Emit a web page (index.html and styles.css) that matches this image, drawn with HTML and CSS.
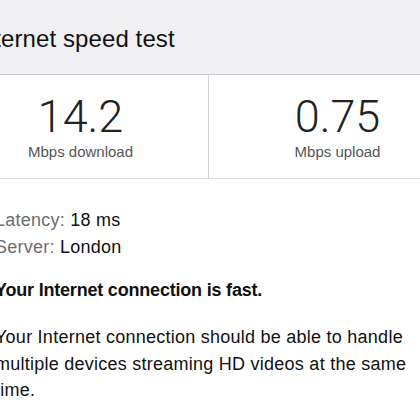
FILE: index.html
```html
<!DOCTYPE html>
<html>
<head>
<meta charset="utf-8">
<link rel="stylesheet" href="styles.css">
</head>
<body>
<div class="page">
  <header class="header">
    <h1 class="title">Internet speed test</h1>
  </header>
  <section class="stats">
    <div class="stat">
      <div class="stat-value">14.2</div>
      <div class="stat-label">Mbps download</div>
    </div>
    <div class="stat">
      <div class="stat-value">0.75</div>
      <div class="stat-label">Mbps upload</div>
    </div>
  </section>
  <section class="details">
    <div class="meta">
      <div class="meta-row"><span class="meta-key">Latency:</span> 18 ms</div>
      <div class="meta-row"><span class="meta-key">Server:</span> London</div>
    </div>
    <p class="verdict">Your Internet connection is fast.</p>
    <p class="explain">Your Internet connection should be able to handle multiple devices streaming HD videos at the same time.</p>
  </section>
</div>
</body>
</html>
```
FILE: styles.css
```css
html, body {
  margin: 0;
  padding: 0;
  background: #ffffff;
  overflow: hidden;
}
body {
  font-family: "Liberation Sans", Arial, sans-serif;
  color: #111111;
}
.page {
  width: 513px;
  margin-left: -47px;
}
.header {
  box-sizing: border-box;
  height: 75px;
  background: #f0f0f3;
  border-bottom: 1px solid #c9c9cd;
  padding: 24px 0 0 21px;
}
.title {
  margin: 0;
  font-size: 24px;
  line-height: 30px;
  font-weight: normal;
  color: #111;
  letter-spacing: 0.1px;
}
.stats {
  display: grid;
  grid-template-columns: 256px 257px;
  border-bottom: 1px solid #dcdcdc;
}
.stat {
  text-align: center;
  padding: 18px 0 17px;
}
.stat:first-child {
  border-right: 1px solid #d6d6d6;
}
.stat-value {
  font-family: Roboto, "Liberation Sans", sans-serif;
  font-weight: 300;
  font-size: 45px;
  line-height: 48px;
  color: #222;
}
.stat-label {
  margin-top: 2px;
  font-size: 15px;
  line-height: 18px;
  color: #555;
}
.details {
  padding: 28px 20px 0 42px;
  font-size: 18px;
  line-height: 27px;
  letter-spacing: 0.25px;
}
.meta-key {
  color: #6d6d72;
}
.verdict {
  margin: 16px 0 0;
  font-weight: bold;
  letter-spacing: -0.2px;
}
.explain {
  margin: 20px 0 0;
  line-height: 26.5px;
  width: 420px;
}
```
